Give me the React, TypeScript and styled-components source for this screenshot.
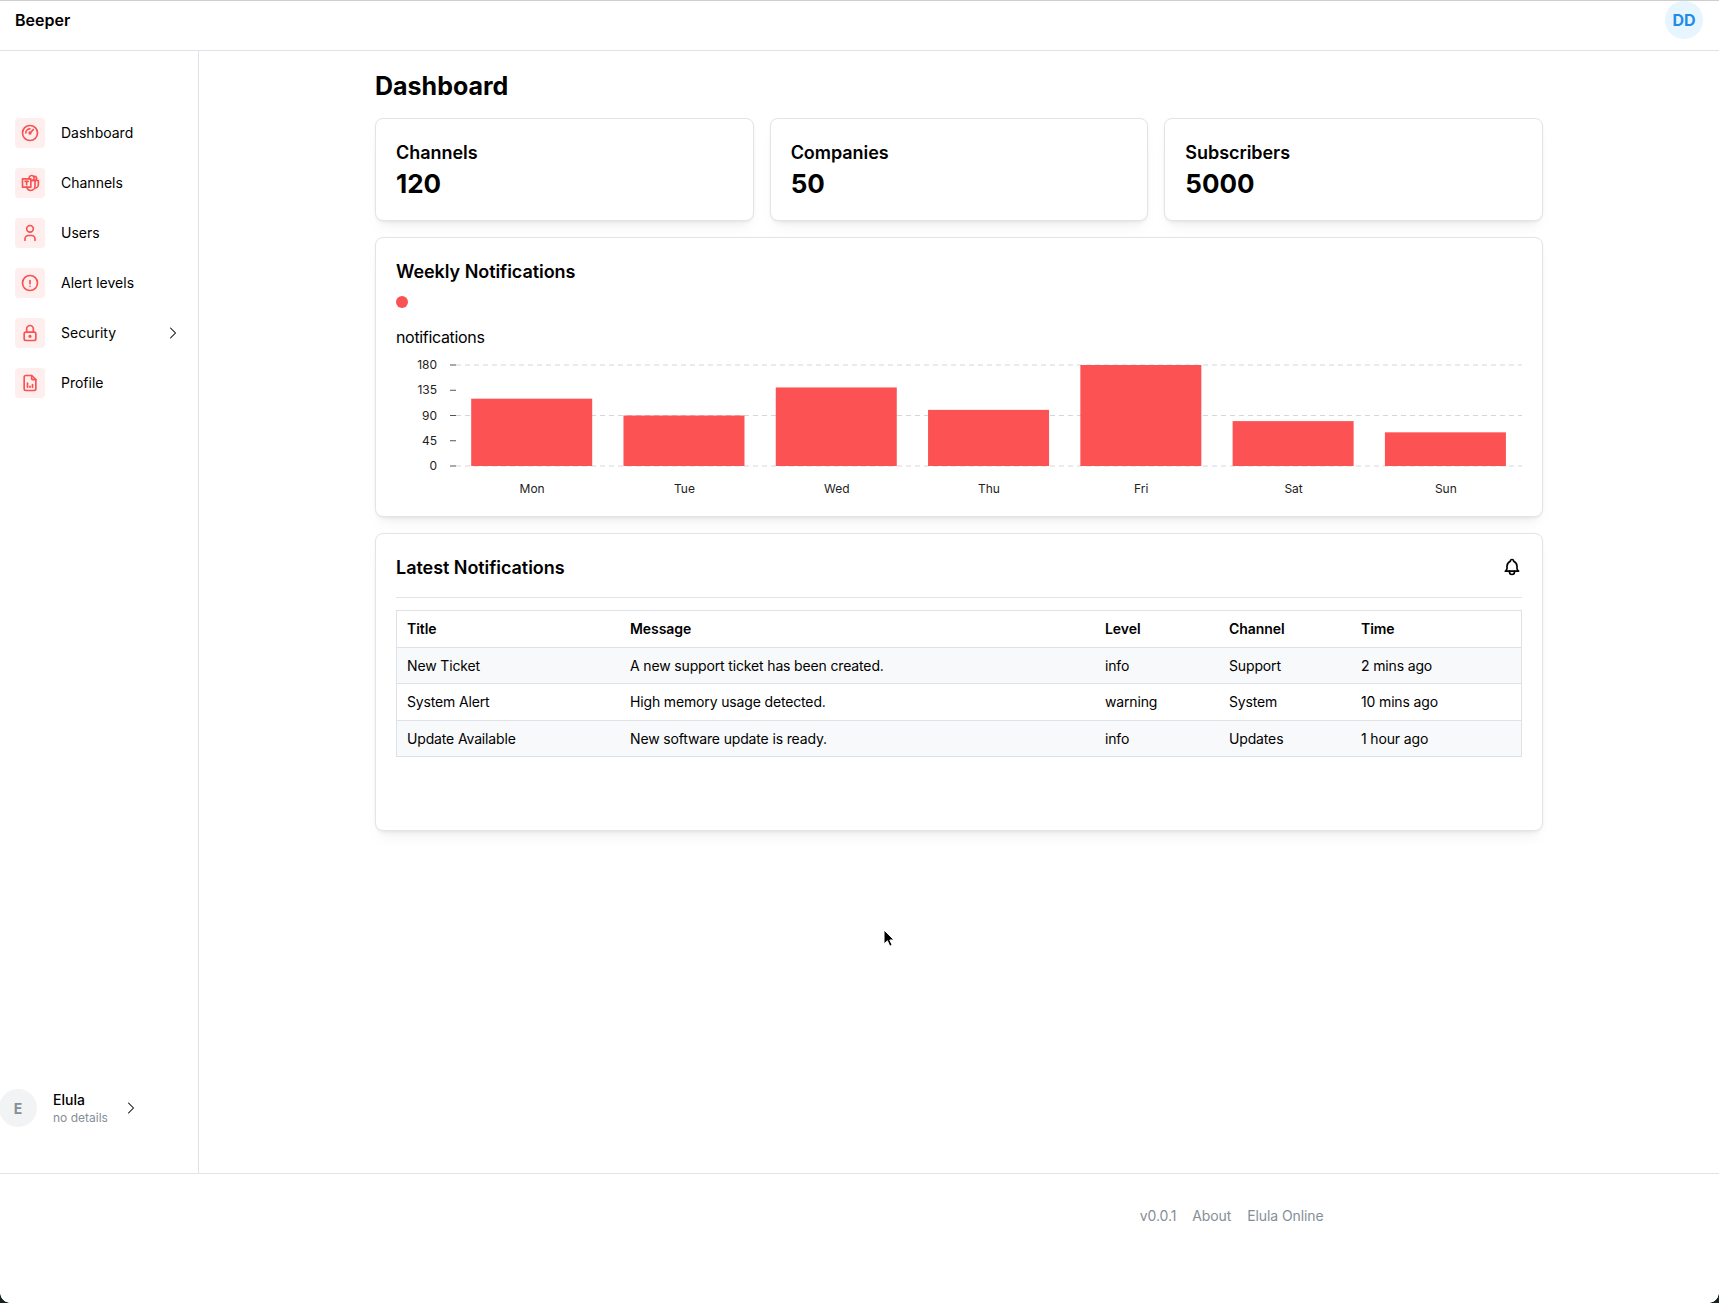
import React from 'react';
import styled, { createGlobalStyle } from 'styled-components';
import {
  TbBell,
  TbBrandTeams,
  TbChevronRight,
  TbExclamationCircle,
  TbFileAnalytics,
  TbGauge,
  TbLock,
  TbUser,
} from 'react-icons/tb';

const GlobalStyle = createGlobalStyle`
  html, body {
    margin: 0;
    padding: 0;
    background: #fff;
  }
  body {
    font-family: Inter, "Liberation Sans", sans-serif;
    color: #000;
    -webkit-font-smoothing: antialiased;
  }
  * {
    box-sizing: border-box;
  }
`;

const Page = styled.div`
  position: relative;
  height: 1303px;
  overflow: hidden;
  display: grid;
  grid-template-rows: 50px 1fr 130px;
  border-top: 1px solid #cfcfcf;
`;

const Header = styled.header`
  display: flex;
  align-items: flex-start;
  justify-content: space-between;
  padding: 0 16px 0 15px;
  border-bottom: 1px solid #e1e1e8;
`;

const Brand = styled.div`
  font-size: 16px;
  line-height: 38px;
  font-weight: 600;
`;

const HeaderAvatar = styled.div`
  width: 38px;
  height: 38px;
  border-radius: 50%;
  background: #e7f5ff;
  color: #228be6;
  font-size: 16px;
  font-weight: 700;
  display: flex;
  align-items: center;
  justify-content: center;
`;

const Body = styled.div`
  display: grid;
  grid-template-columns: 199px 1fr;
  min-height: 0;
`;

const Sidebar = styled.aside`
  display: flex;
  flex-direction: column;
  justify-content: space-between;
  border-right: 1px solid #e1e1e8;
  padding: 67px 0 46px;
`;

const Nav = styled.nav`
  display: flex;
  flex-direction: column;
  gap: 20px;
  padding: 0 15px;
`;

const NavItem = styled.div`
  display: flex;
  align-items: center;
  height: 30px;
  gap: 16px;
  font-size: 14px;
`;

const NavIcon = styled.span`
  width: 30px;
  height: 30px;
  border-radius: 4px;
  background: #feeeee;
  color: #fa5252;
  display: flex;
  align-items: center;
  justify-content: center;
`;

const NavLabel = styled.span`
  flex: 1;
  padding-bottom: 2px;
`;

const UserRow = styled.div`
  display: flex;
  align-items: center;
  margin-left: -1px;
`;

const UserAvatar = styled.div`
  width: 38px;
  height: 38px;
  border-radius: 50%;
  background: #f1f3f5;
  color: #868e96;
  font-size: 14px;
  font-weight: 700;
  display: flex;
  align-items: center;
  justify-content: center;
  margin-right: 16px;
`;

const UserInfo = styled.div`
  display: flex;
  flex-direction: column;
  width: 68px;
`;

const UserName = styled.span`
  font-size: 14px;
  line-height: 18px;
  font-weight: 500;
`;

const UserDetails = styled.span`
  font-size: 12px;
  line-height: 17px;
  color: #868e96;
`;

const Main = styled.main`
  padding-top: 19px;
`;

const Content = styled.div`
  width: 1168px;
  margin: 0 auto;
  display: flex;
  flex-direction: column;
  gap: 16px;
`;

const PageTitle = styled.h1`
  margin: 0;
  font-size: 25px;
  line-height: 32px;
  font-weight: 700;
`;

const Stats = styled.div`
  display: grid;
  grid-template-columns: repeat(3, 1fr);
  gap: 16px;
`;

const Card = styled.section`
  background: #fff;
  border: 1px solid #e3e3ea;
  border-radius: 8px;
  padding: 20px;
  box-shadow: 0 1px 3px rgba(0, 0, 0, 0.05), 0 10px 15px -5px rgba(0, 0, 0, 0.05),
    0 7px 7px -5px rgba(0, 0, 0, 0.04);
`;

const StatCard = styled(Card)`
  height: 103px;
`;

const StatLabel = styled.div`
  font-size: 18px;
  line-height: 28px;
  font-weight: 600;
  letter-spacing: -0.05px;
`;

const StatValue = styled.div`
  font-size: 26px;
  line-height: 34px;
  font-weight: 700;
`;

const CardTitle = styled.h2`
  margin: 0;
  font-size: 18px;
  line-height: 28px;
  font-weight: 600;
  letter-spacing: -0.05px;
`;

const ChartCard = styled(Card)`
  height: 280px;
`;

const LegendDot = styled.div`
  width: 12px;
  height: 12px;
  border-radius: 50%;
  background: #fa5252;
  margin-top: 10px;
`;

const AxisTitle = styled.div`
  font-size: 16px;
  line-height: 24px;
  letter-spacing: -0.33px;
  margin: 17px 0 1px;
`;

const ChartSvg = styled.svg`
  display: block;
  font-family: Inter, "Liberation Sans", sans-serif;
  font-size: 12px;
`;

const TableCard = styled(Card)`
  height: 298px;
`;

const TableHead = styled.div`
  display: flex;
  align-items: center;
  justify-content: space-between;
  padding-bottom: 15px;
  margin-bottom: 12px;
  border-bottom: 1px solid #e3e3ea;
`;

const BellIcon = styled(TbBell)`
  margin-bottom: 2px;
`;

const Table = styled.table`
  width: calc(100% - 2px);
  table-layout: fixed;
  border-collapse: collapse;
  border: 1px solid #dee2e6;
  font-size: 14px;
`;

const Th = styled.th<{ $w: number }>`
  width: ${(p) => p.$w}px;
  height: 36.5px;
  padding: 0 10px;
  text-align: left;
  font-weight: 600;
  letter-spacing: -0.05px;
  border-bottom: 1px solid #dee2e6;
`;

const Row = styled.tr`
  &:nth-child(odd) {
    background: #f8f9fa;
  }
`;

const Td = styled.td`
  height: 36.5px;
  padding: 0 10px;
  letter-spacing: -0.15px;
  border-bottom: 1px solid #dee2e6;
`;

const Footer = styled.footer`
  border-top: 1px solid #e4e4e8;
`;

const FooterInner = styled.div`
  width: 928px;
  margin: 0 auto;
  padding-top: 32px;
  display: flex;
  justify-content: flex-end;
  gap: 16px;
  font-size: 14px;
  line-height: 20px;
  letter-spacing: -0.1px;
  color: #868e96;
`;

const Pointer = styled.svg`
  position: absolute;
  left: 881px;
  top: 927px;
`;

const Corner = styled.div<{ $side: 'left' | 'right' }>`
  position: absolute;
  bottom: 0;
  ${(p) => p.$side}: 0;
  width: 10px;
  height: 10px;
  background: radial-gradient(
    circle at ${(p) => (p.$side === 'left' ? '100% 0' : '0 0')},
    transparent 9.5px,
    #14261c 10px
  );
`;

const navItems = [
  { label: 'Dashboard', icon: TbGauge },
  { label: 'Channels', icon: TbBrandTeams },
  { label: 'Users', icon: TbUser },
  { label: 'Alert levels', icon: TbExclamationCircle },
  { label: 'Security', icon: TbLock, more: true },
  { label: 'Profile', icon: TbFileAnalytics },
];

const stats = [
  { label: 'Channels', value: 120 },
  { label: 'Companies', value: 50 },
  { label: 'Subscribers', value: 5000 },
];

const weekly = [
  { day: 'Mon', value: 120 },
  { day: 'Tue', value: 90 },
  { day: 'Wed', value: 140 },
  { day: 'Thu', value: 100 },
  { day: 'Fri', value: 180 },
  { day: 'Sat', value: 80 },
  { day: 'Sun', value: 60 },
];

const columns = [
  { label: 'Title', width: 223.5 },
  { label: 'Message', width: 475 },
  { label: 'Level', width: 124 },
  { label: 'Channel', width: 132 },
  { label: 'Time', width: 170 },
];

const notifications = [
  ['New Ticket', 'A new support ticket has been created.', 'info', 'Support', '2 mins ago'],
  ['System Alert', 'High memory usage detected.', 'warning', 'System', '10 mins ago'],
  ['Update Available', 'New software update is ready.', 'info', 'Updates', '1 hour ago'],
];

const plotLeft = 60;
const plotRight = 1126;
const plotTop = 15;
const plotBottom = 116;
const band = (plotRight - plotLeft) / weekly.length;
const yOf = (v: number) => plotBottom - (v / 180) * (plotBottom - plotTop);

const WeeklyChart: React.FC = () => (
  <ChartSvg width={1126} height={146}>
    {[180, 90, 0].map((v) => (
      <line
        key={v}
        x1={plotLeft}
        x2={plotRight}
        y1={yOf(v)}
        y2={yOf(v)}
        stroke="#d4d6da"
        strokeDasharray="5 4"
      />
    ))}
    {[180, 135, 90, 45, 0].map((v) => (
      <g key={v}>
        <line x1={54} x2={60} y1={yOf(v)} y2={yOf(v)} stroke="#555" />
        <text x={41} y={yOf(v) + 4} textAnchor="end" fill="#222">
          {v}
        </text>
      </g>
    ))}
    {weekly.map((d, i) => (
      <g key={d.day}>
        <rect
          x={plotLeft + band * i + 15.2}
          y={yOf(d.value)}
          width={121}
          height={plotBottom - yOf(d.value)}
          fill="#fc5254"
        />
        <text x={plotLeft + band * (i + 0.5)} y={143} textAnchor="middle" fill="#222">
          {d.day}
        </text>
      </g>
    ))}
  </ChartSvg>
);

const App: React.FC = () => {
  return (
    <>
      <GlobalStyle />
      <Page>
        <Header>
          <Brand>Beeper</Brand>
          <HeaderAvatar>DD</HeaderAvatar>
        </Header>

        <Body>
          <Sidebar>
            <Nav>
              {navItems.map((item) => (
                <NavItem key={item.label}>
                  <NavIcon>
                    <item.icon size={20} />
                  </NavIcon>
                  <NavLabel>{item.label}</NavLabel>
                  {item.more && <TbChevronRight size={20} strokeWidth={1.25} />}
                </NavItem>
              ))}
            </Nav>
            <UserRow>
              <UserAvatar>E</UserAvatar>
              <UserInfo>
                <UserName>Elula</UserName>
                <UserDetails>no details</UserDetails>
              </UserInfo>
              <TbChevronRight size={20} strokeWidth={1.25} />
            </UserRow>
          </Sidebar>

          <Main>
            <Content>
              <PageTitle>Dashboard</PageTitle>

              <Stats>
                {stats.map((s) => (
                  <StatCard key={s.label}>
                    <StatLabel>{s.label}</StatLabel>
                    <StatValue>{s.value}</StatValue>
                  </StatCard>
                ))}
              </Stats>

              <ChartCard>
                <CardTitle>Weekly Notifications</CardTitle>
                <LegendDot />
                <AxisTitle>notifications</AxisTitle>
                <WeeklyChart />
              </ChartCard>

              <TableCard>
                <TableHead>
                  <CardTitle>Latest Notifications</CardTitle>
                  <BellIcon size={20} />
                </TableHead>
                <Table>
                  <thead>
                    <tr>
                      {columns.map((c) => (
                        <Th key={c.label} $w={c.width}>
                          {c.label}
                        </Th>
                      ))}
                    </tr>
                  </thead>
                  <tbody>
                    {notifications.map((row) => (
                      <Row key={row[0]}>
                        {row.map((cell) => (
                          <Td key={cell}>{cell}</Td>
                        ))}
                      </Row>
                    ))}
                  </tbody>
                </Table>
              </TableCard>
            </Content>
          </Main>
        </Body>

        <Footer>
          <FooterInner>
            <span>v0.0.1</span>
            <span>About</span>
            <span>Elula Online</span>
          </FooterInner>
        </Footer>

        <Pointer width={16} height={22} viewBox="0 0 16 22">
          <path
            d="M3 2v14l3.4-3.2 2.4 5.4 2.4-1-2.4-5.2H13z"
            fill="#000"
            stroke="#fff"
            strokeWidth="1"
          />
        </Pointer>
        <Corner $side="left" />
        <Corner $side="right" />
      </Page>
    </>
  );
};

export default App;
